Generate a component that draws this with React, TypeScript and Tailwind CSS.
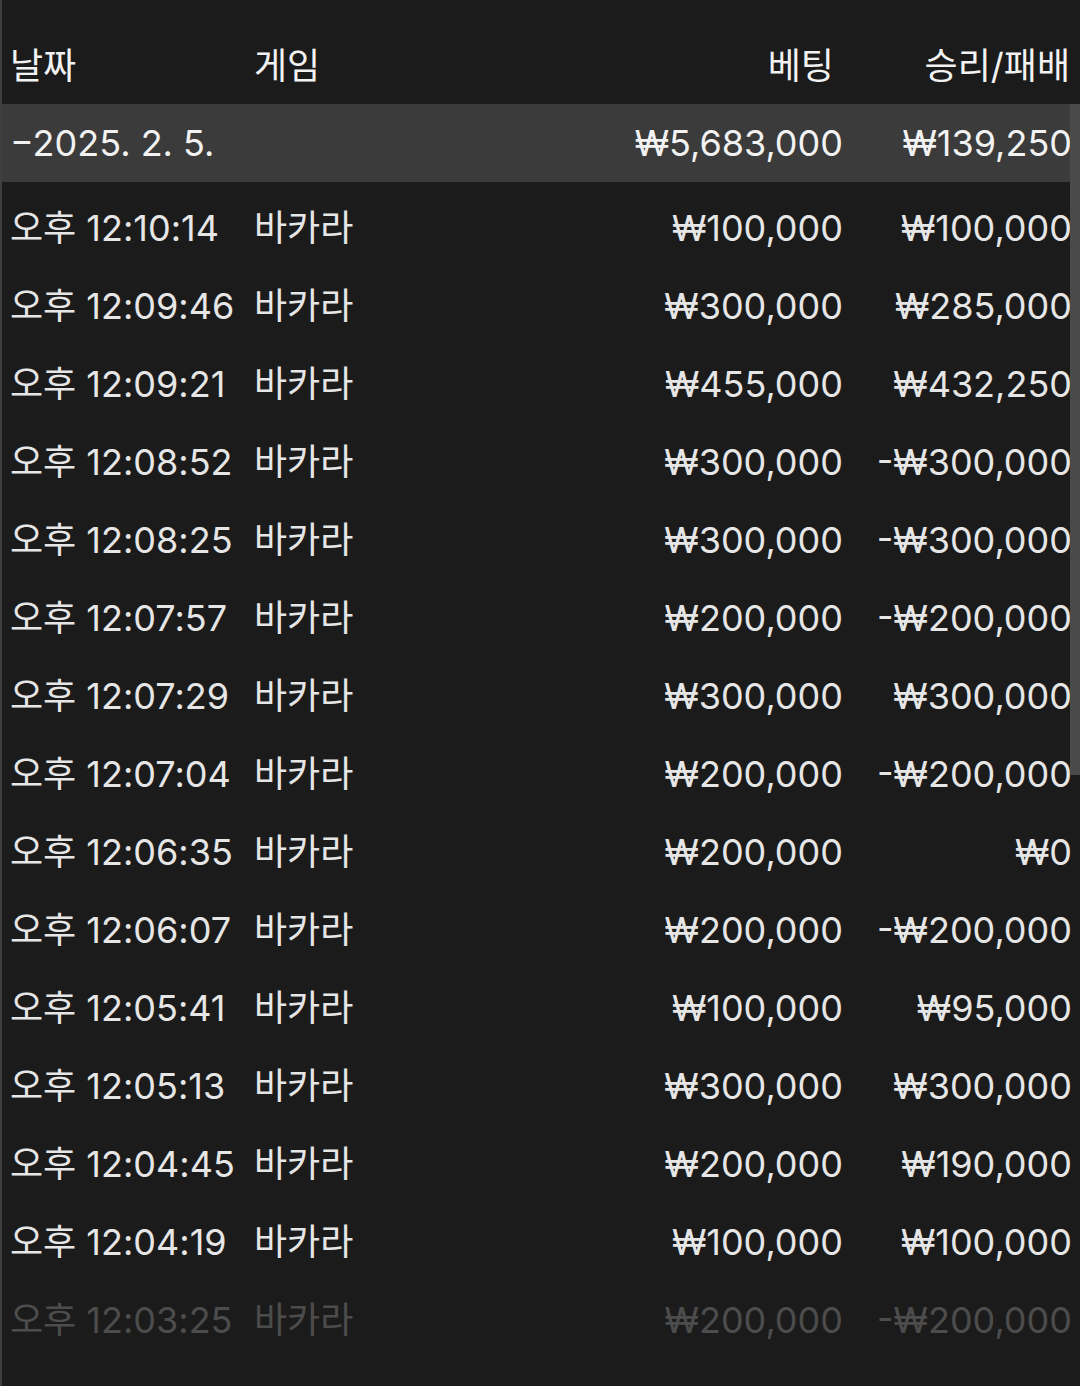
import React from "react";

type Row = { time: string; game: string; bet: string; result: string };

const rows: Row[] = [
  { time: "오후 12:10:14", game: "바카라", bet: "₩100,000", result: "₩100,000" },
  { time: "오후 12:09:46", game: "바카라", bet: "₩300,000", result: "₩285,000" },
  { time: "오후 12:09:21", game: "바카라", bet: "₩455,000", result: "₩432,250" },
  { time: "오후 12:08:52", game: "바카라", bet: "₩300,000", result: "-₩300,000" },
  { time: "오후 12:08:25", game: "바카라", bet: "₩300,000", result: "-₩300,000" },
  { time: "오후 12:07:57", game: "바카라", bet: "₩200,000", result: "-₩200,000" },
  { time: "오후 12:07:29", game: "바카라", bet: "₩300,000", result: "₩300,000" },
  { time: "오후 12:07:04", game: "바카라", bet: "₩200,000", result: "-₩200,000" },
  { time: "오후 12:06:35", game: "바카라", bet: "₩200,000", result: "₩0" },
  { time: "오후 12:06:07", game: "바카라", bet: "₩200,000", result: "-₩200,000" },
  { time: "오후 12:05:41", game: "바카라", bet: "₩100,000", result: "₩95,000" },
  { time: "오후 12:05:13", game: "바카라", bet: "₩300,000", result: "₩300,000" },
  { time: "오후 12:04:45", game: "바카라", bet: "₩200,000", result: "₩190,000" },
  { time: "오후 12:04:19", game: "바카라", bet: "₩100,000", result: "₩100,000" },
  { time: "오후 12:03:25", game: "바카라", bet: "₩200,000", result: "-₩200,000" },
];

const font = "font-['Inter','Noto_Sans_CJK_KR',sans-serif]";

export default function App() {
  return (
    <div
      className={`relative w-[1080px] h-[1386px] overflow-hidden bg-[#1b1b1b] border-l-2 border-[#3e3e3e] text-[36px] leading-none ${font}`}
    >
      {/* 헤더 */}
      <div className="h-[104px] flex items-center text-[#f2f2f2] pt-[28px]">
        <div className="w-[252px] pl-[8px]">날짜</div>
        <div className="w-[200px]">게임</div>
        <div className="w-[380px] text-right">베팅</div>
        <div className="flex-1 text-right pr-[10px]">승리/패배</div>
      </div>

      {/* 날짜 합계 */}
      <div className="h-[78px] flex items-center bg-[#3b3b3b] text-[#f2f2f2]">
        <div className="w-[452px] pl-[8px]">−2025. 2. 5.</div>
        <div className="w-[389px] text-right">₩5,683,000</div>
        <div className="flex-1 text-right pr-[8px]">₩139,250</div>
      </div>

      <div className="pt-[7px]">
        {rows.map((r, i) => (
          <div
            key={i}
            className={`h-[78px] flex items-center ${
              i === rows.length - 1 ? "text-[#4c4c4c]" : "text-[#e6e6e6]"
            }`}
          >
            <div className="w-[252px] pl-[8px] whitespace-nowrap">{r.time}</div>
            <div className="w-[200px]">{r.game}</div>
            <div className="w-[389px] text-right">{r.bet}</div>
            <div className="flex-1 text-right pr-[8px]">{r.result}</div>
          </div>
        ))}
      </div>

      {/* 스크롤바 */}
      <div className="absolute right-0 top-[104px] w-[10px] h-[671px] bg-[#4a4a4a]" />
    </div>
  );
}
